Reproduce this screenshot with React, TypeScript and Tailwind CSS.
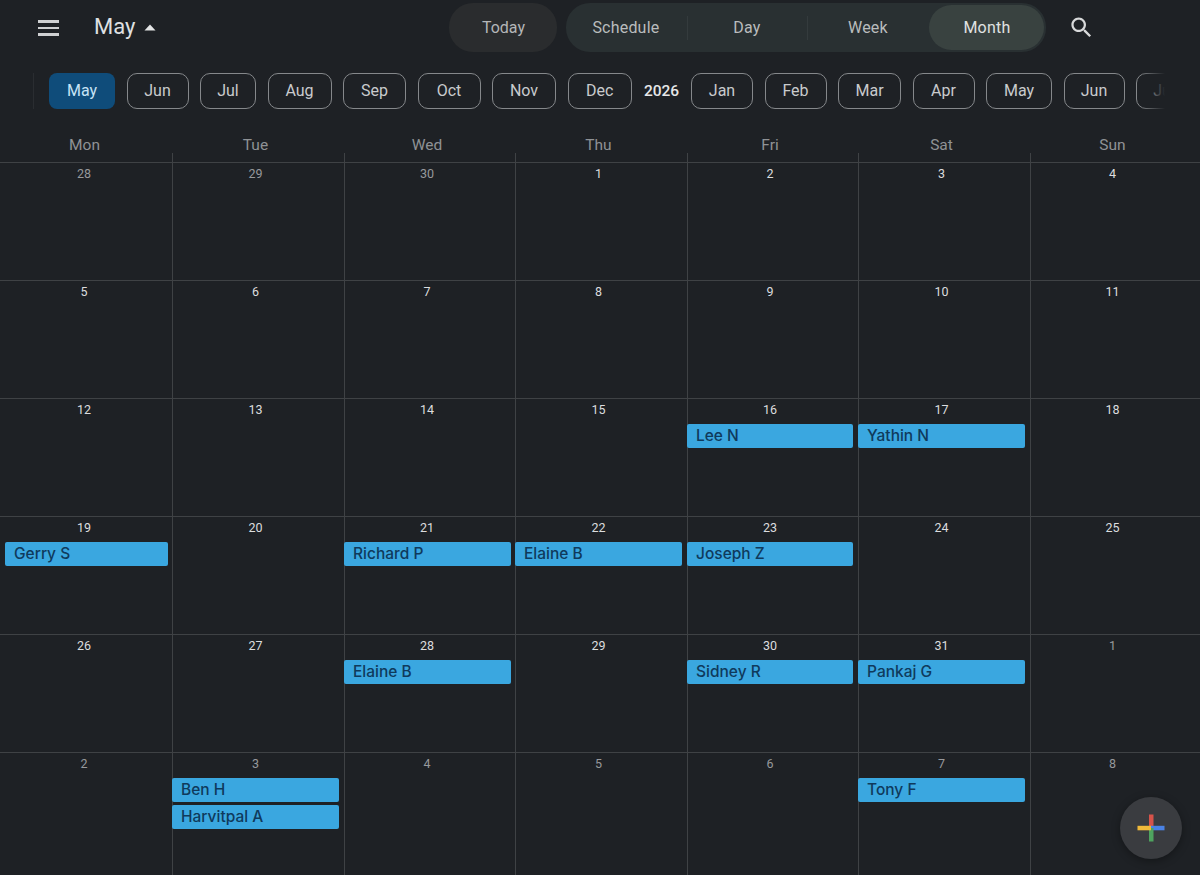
const FONT = "font-['Roboto','Noto_Sans',sans-serif]";

type Pill = { label: string; width: string };

const pills: Pill[] = [
    { label: "Jun", width: "w-[62px]" },
    { label: "Jul", width: "w-[56px]" },
    { label: "Aug", width: "w-[64px]" },
    { label: "Sep", width: "w-[63px]" },
    { label: "Oct", width: "w-[63px]" },
    { label: "Nov", width: "w-[64px]" },
    { label: "Dec", width: "w-[64.5px]" },
];

const pillsNext: Pill[] = [
    { label: "Jan", width: "w-[62px]" },
    { label: "Feb", width: "w-[62px]" },
    { label: "Mar", width: "w-[63px]" },
    { label: "Apr", width: "w-[62px]" },
    { label: "May", width: "w-[66px]" },
    { label: "Jun", width: "w-[61px]" },
    { label: "Jul", width: "w-[56px]" },
];

const weekdays = ["Mon", "Tue", "Wed", "Thu", "Fri", "Sat", "Sun"];

type Day = { n: number; dim?: boolean; events?: string[] };

const weeks: Day[][] = [
    [{ n: 28, dim: true }, { n: 29, dim: true }, { n: 30, dim: true }, { n: 1 }, { n: 2 }, { n: 3 }, { n: 4 }],
    [{ n: 5 }, { n: 6 }, { n: 7 }, { n: 8 }, { n: 9 }, { n: 10 }, { n: 11 }],
    [{ n: 12 }, { n: 13 }, { n: 14 }, { n: 15 }, { n: 16, events: ["Lee N"] }, { n: 17, events: ["Yathin N"] }, { n: 18 }],
    [
        { n: 19, events: ["Gerry S"] },
        { n: 20 },
        { n: 21, events: ["Richard P"] },
        { n: 22, events: ["Elaine B"] },
        { n: 23, events: ["Joseph Z"] },
        { n: 24 },
        { n: 25 },
    ],
    [
        { n: 26 },
        { n: 27 },
        { n: 28, events: ["Elaine B"] },
        { n: 29 },
        { n: 30, events: ["Sidney R"] },
        { n: 31, events: ["Pankaj G"] },
        { n: 1, dim: true },
    ],
    [
        { n: 2, dim: true },
        { n: 3, dim: true, events: ["Ben H", "Harvitpal A"] },
        { n: 4, dim: true },
        { n: 5, dim: true },
        { n: 6, dim: true },
        { n: 7, dim: true, events: ["Tony F"] },
        { n: 8, dim: true },
    ],
];

const COLS = "grid grid-cols-[172px_172px_171px_172px_171px_172px_170px]";

function MonthPill({ label, width }: Pill) {
    return (
        <div
            className={`${width} flex h-[36px] shrink-0 items-center justify-center rounded-[10px] border border-[#85888b] text-[16px] text-[#c9cbcd]`}
        >
            {label}
        </div>
    );
}

function Fab() {
    return (
        <div className="absolute left-[1120px] top-[797px] flex h-[62px] w-[62px] items-center justify-center rounded-full bg-[#3a3c40] shadow-[0_2px_8px_rgba(0,0,0,0.35)]">
            <svg width="28" height="28" viewBox="0 0 28 28">
                <rect x="12" y="0.5" width="4.5" height="13.5" fill="#d6534a" />
                <rect x="14" y="11.8" width="13.5" height="4.5" fill="#4a82e4" />
                <rect x="12" y="14" width="4.5" height="13.5" fill="#4ea35f" />
                <rect x="0.5" y="11.8" width="13.5" height="4.5" fill="#f0b93a" />
            </svg>
        </div>
    );
}

export default function App() {
    return (
        <div className={`${FONT} relative h-[875px] w-[1200px] overflow-hidden bg-[#1e2125]`}>
            {/* top bar */}
            <div className="flex h-[73px] items-start">
                <div className="ml-[38px] mt-[20px] flex w-[21px] flex-col gap-[4px]">
                    <div className="h-[2.5px] bg-[#cfd0d2]" />
                    <div className="h-[2.5px] bg-[#cfd0d2]" />
                    <div className="h-[2.5px] bg-[#cfd0d2]" />
                </div>
                <span className="ml-[35px] mt-[12px] text-[22px] leading-[30px] text-[#dfe0e2]">May</span>
                <svg className="ml-[9px] mt-[24px]" width="12" height="7" viewBox="0 0 12 7">
                    <path d="M6 0.5 L11.5 6.5 L0.5 6.5 Z" fill="#e4e5e6" />
                </svg>
                <div className="ml-[293px] mt-[3px] flex h-[49px] w-[108px] items-center justify-center rounded-[24px] bg-[#2a2c2e] text-[16px] text-[#b4b6b8]">
                    Today
                </div>
                <div className="ml-[9px] mt-[3px] flex h-[49px] w-[480px] items-center rounded-[24px] bg-[#293032] pr-[2px] text-[16px] tracking-[0.2px] text-[#b9bcbd]">
                    <div className="flex h-[24px] w-[122px] items-center justify-center border-r border-[#343b3d] pr-[2px]">
                        Schedule
                    </div>
                    <div className="flex h-[24px] w-[120px] items-center justify-center border-r border-[#343b3d] pr-[2px]">
                        Day
                    </div>
                    <div className="flex h-[24px] w-[121px] items-center justify-center pr-[2px]">Week</div>
                    <div className="flex h-[45px] w-[115px] items-center justify-center rounded-[23px] bg-[#394240] text-[#e0e2e2]">
                        Month
                    </div>
                </div>
                <svg className="ml-[22px] mt-[14px]" width="27" height="27" viewBox="0 0 24 24" fill="#d8d9da">
                    <path d="M15.5 14h-.79l-.28-.27C15.41 12.59 16 11.11 16 9.5 16 5.91 13.09 3 9.5 3S3 5.91 3 9.5 5.91 16 9.5 16c1.61 0 3.09-.59 4.23-1.57l.27.28v.79l5 4.99L20.49 19l-4.99-5zm-6 0C7.01 14 5 11.99 5 9.5S7.01 5 9.5 5 14 7.01 14 9.5 11.99 14 9.5 14z" />
                </svg>
            </div>

            {/* month strip */}
            <div className="relative h-[36px] w-[1165px] overflow-hidden">
                <div className="ml-[33px] flex h-full items-center gap-[11.5px] border-l border-[#2a2d31] pl-[15px]">
                    <div className="flex h-[36px] w-[66px] shrink-0 items-center justify-center rounded-[8px] bg-[#0f4c7a] text-[16px] text-[#c6e3f6]">
                        May
                    </div>
                    {pills.map((p, i) => (
                        <MonthPill key={i} {...p} />
                    ))}
                    <span className="w-[36px] shrink-0 pt-[1px] text-center text-[15.5px] font-medium text-[#e6e7e8]">2026</span>
                    {pillsNext.map((p, i) => (
                        <MonthPill key={i} {...p} />
                    ))}
                </div>
                <div className="absolute right-0 top-0 h-full w-[26px] bg-gradient-to-r from-transparent to-[#1e2125]" />
            </div>

            {/* weekday header */}
            <div className={`${COLS} mt-[26px] h-[27px]`}>
                {weekdays.map((d, i) => (
                    <div key={d} className="flex flex-col">
                        <div className={`h-[18px] text-center text-[15.5px] leading-[20px] text-[#8f9295] ${i === 0 ? "pr-[3px]" : "pr-[5px]"}`}>
                            {d}
                        </div>
                        <div className={`h-[9px] ${i > 0 ? "border-l border-[#3f4245]" : ""}`} />
                    </div>
                ))}
            </div>

            {/* weeks */}
            {weeks.map((week, w) => (
                <div key={w} className={`${COLS} ${w === 5 ? "h-[123px]" : "h-[118px]"} border-t border-[#3f4245]`}>
                    {week.map((day, d) => (
                        <div key={d} className={`pt-[3px] ${d > 0 ? "border-l border-[#3f4245]" : "pl-[5px]"}`}>
                            <div
                                className={`h-[16px] text-center text-[12.5px] leading-[16px] ${
                                    d === 0 ? "-ml-[5px] pr-[4px]" : "pr-[6px]"
                                } ${day.dim ? "text-[#97999c]" : "text-[#dcdddf]"}`}
                            >
                                {day.n}
                            </div>
                            <div
                                className={`mt-[6px] flex flex-col gap-[3px] ${d > 0 ? "-ml-px" : ""} ${
                                    d === 0 || d === 2 ? "mr-[4px]" : "mr-[5px]"
                                }`}
                            >
                                {(day.events ?? []).map((e) => (
                                    <div
                                        key={e}
                                        className="flex h-[24px] items-center rounded-[2px] bg-[#3aa7e0] pl-[9px] font-['Inter',sans-serif] text-[15.5px] font-medium text-[#0f3a5c]"
                                    >
                                        {e}
                                    </div>
                                ))}
                            </div>
                        </div>
                    ))}
                </div>
            ))}

            <Fab />
        </div>
    );
}
